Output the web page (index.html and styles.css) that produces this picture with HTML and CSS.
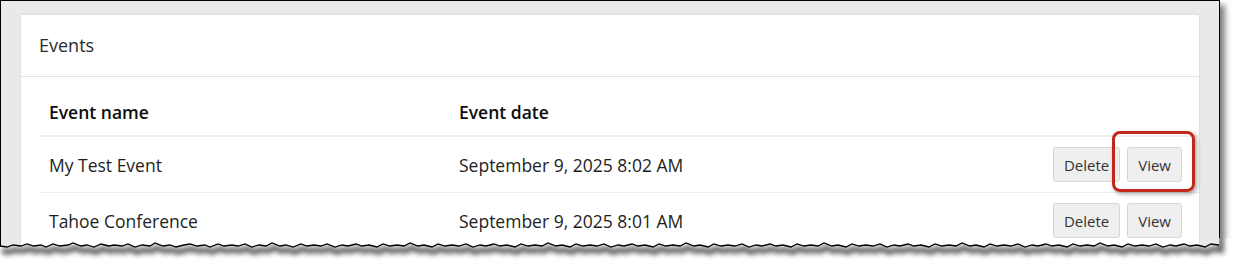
FILE: index.html
```html
<!DOCTYPE html>
<html lang="en">

<head>
    <meta charset="UTF-8">
    <meta name="viewport" content="width=device-width, initial-scale=1.0">
    <title>Events</title>
    <link rel="stylesheet" href="styles.css">
</head>

<body>
    <div class="shot">
        <div class="frame">
            <!-- Events card -->
            <section class="card">
                <div class="card-header">Events</div>
                <div class="card-body">
                    <table class="events">
                        <thead>
                            <tr>
                                <th class="col-name">Event name</th>
                                <th class="col-date">Event date</th>
                                <th class="col-actions"></th>
                            </tr>
                        </thead>
                        <tbody>
                            <tr>
                                <td>My Test Event</td>
                                <td>September 9, 2025 8:02 AM</td>
                                <td class="col-actions">
                                    <div class="actions">
                                        <button class="btn">Delete</button>
                                        <span class="btn-wrap">
                                            <button class="btn">View</button>
                                            <span class="callout"></span>
                                        </span>
                                    </div>
                                </td>
                            </tr>
                            <tr>
                                <td>Tahoe Conference</td>
                                <td>September 9, 2025 8:01 AM</td>
                                <td class="col-actions">
                                    <div class="actions">
                                        <button class="btn">Delete</button>
                                        <button class="btn">View</button>
                                    </div>
                                </td>
                            </tr>
                        </tbody>
                    </table>
                </div>
            </section>
        </div>

        <!-- torn bottom edge of the screenshot -->
        <svg class="torn" width="1235" height="29" viewBox="0 0 1235 29">
            <defs>
                <filter id="blur" x="-5%" y="-100%" width="110%" height="300%">
                    <feGaussianBlur stdDeviation="2.4" />
                </filter>
                <clipPath id="below">
                    <polygon points="0,0 0,8 7,9 13,7 21,8 27,6 34,8 41,7 46,9 53,6 60,8 68,7 73,5 81,8 87,7 94,9 101,6 109,8 114,7 122,8 128,6 135,9 142,7 150,8 155,5 163,8 170,7 176,9 184,7 190,6 197,8 205,7 210,9 218,6 224,8 232,7 238,8 245,6 252,9 259,7 266,8 272,5 280,8 286,7 293,9 301,6 307,8 314,7 321,8 327,6 335,9 342,7 348,8 356,6 362,8 369,7 377,9 383,6 390,8 397,7 404,8 410,5 418,8 424,7 432,9 438,6 445,8 452,7 459,8 466,6 473,9 480,7 486,8 494,6 500,8 507,7 515,9 521,6 528,8 535,7 542,8 548,5 556,8 562,7 570,9 576,6 583,8 590,7 597,8 604,6 611,9 618,7 624,8 632,6 638,8 645,7 653,9 659,6 666,8 673,7 680,8 686,5 694,8 700,7 708,9 714,6 721,8 728,7 735,8 742,6 749,9 756,7 762,8 770,6 776,8 783,7 791,9 797,6 804,8 811,7 818,8 824,5 832,8 838,7 846,9 852,6 859,8 866,7 873,8 880,6 887,9 894,7 900,8 908,6 914,8 921,7 929,9 935,6 942,8 949,7 956,8 962,5 970,8 976,7 984,9 990,6 997,8 1004,7 1011,8 1018,6 1025,9 1032,7 1038,8 1046,6 1052,8 1059,7 1067,9 1073,6 1080,8 1087,7 1094,8 1100,5 1108,8 1114,7 1122,9 1128,6 1135,8 1142,7 1149,8 1156,6 1163,9 1170,7 1176,8 1184,6 1190,8 1197,7 1205,9 1211,6 1219,7 1219,0 1235,0 1235,29 0,29" />
                </clipPath>
            </defs>
            <rect class="cover" x="0" y="0" width="1235" height="29" clip-path="url(#below)" />
            <g clip-path="url(#below)">
                <polyline class="shade" filter="url(#blur)" transform="translate(2 5)" points="0,8 7,9 13,7 21,8 27,6 34,8 41,7 46,9 53,6 60,8 68,7 73,5 81,8 87,7 94,9 101,6 109,8 114,7 122,8 128,6 135,9 142,7 150,8 155,5 163,8 170,7 176,9 184,7 190,6 197,8 205,7 210,9 218,6 224,8 232,7 238,8 245,6 252,9 259,7 266,8 272,5 280,8 286,7 293,9 301,6 307,8 314,7 321,8 327,6 335,9 342,7 348,8 356,6 362,8 369,7 377,9 383,6 390,8 397,7 404,8 410,5 418,8 424,7 432,9 438,6 445,8 452,7 459,8 466,6 473,9 480,7 486,8 494,6 500,8 507,7 515,9 521,6 528,8 535,7 542,8 548,5 556,8 562,7 570,9 576,6 583,8 590,7 597,8 604,6 611,9 618,7 624,8 632,6 638,8 645,7 653,9 659,6 666,8 673,7 680,8 686,5 694,8 700,7 708,9 714,6 721,8 728,7 735,8 742,6 749,9 756,7 762,8 770,6 776,8 783,7 791,9 797,6 804,8 811,7 818,8 824,5 832,8 838,7 846,9 852,6 859,8 866,7 873,8 880,6 887,9 894,7 900,8 908,6 914,8 921,7 929,9 935,6 942,8 949,7 956,8 962,5 970,8 976,7 984,9 990,6 997,8 1004,7 1011,8 1018,6 1025,9 1032,7 1038,8 1046,6 1052,8 1059,7 1067,9 1073,6 1080,8 1087,7 1094,8 1100,5 1108,8 1114,7 1122,9 1128,6 1135,8 1142,7 1149,8 1156,6 1163,9 1170,7 1176,8 1184,6 1190,8 1197,7 1205,9 1211,6 1219,7 1219,-20" />
            </g>
            <polyline class="edge" points="0,8 7,9 13,7 21,8 27,6 34,8 41,7 46,9 53,6 60,8 68,7 73,5 81,8 87,7 94,9 101,6 109,8 114,7 122,8 128,6 135,9 142,7 150,8 155,5 163,8 170,7 176,9 184,7 190,6 197,8 205,7 210,9 218,6 224,8 232,7 238,8 245,6 252,9 259,7 266,8 272,5 280,8 286,7 293,9 301,6 307,8 314,7 321,8 327,6 335,9 342,7 348,8 356,6 362,8 369,7 377,9 383,6 390,8 397,7 404,8 410,5 418,8 424,7 432,9 438,6 445,8 452,7 459,8 466,6 473,9 480,7 486,8 494,6 500,8 507,7 515,9 521,6 528,8 535,7 542,8 548,5 556,8 562,7 570,9 576,6 583,8 590,7 597,8 604,6 611,9 618,7 624,8 632,6 638,8 645,7 653,9 659,6 666,8 673,7 680,8 686,5 694,8 700,7 708,9 714,6 721,8 728,7 735,8 742,6 749,9 756,7 762,8 770,6 776,8 783,7 791,9 797,6 804,8 811,7 818,8 824,5 832,8 838,7 846,9 852,6 859,8 866,7 873,8 880,6 887,9 894,7 900,8 908,6 914,8 921,7 929,9 935,6 942,8 949,7 956,8 962,5 970,8 976,7 984,9 990,6 997,8 1004,7 1011,8 1018,6 1025,9 1032,7 1038,8 1046,6 1052,8 1059,7 1067,9 1073,6 1080,8 1087,7 1094,8 1100,5 1108,8 1114,7 1122,9 1128,6 1135,8 1142,7 1149,8 1156,6 1163,9 1170,7 1176,8 1184,6 1190,8 1197,7 1205,9 1211,6 1219,7" />
        </svg>
    </div>
</body>

</html>
```

FILE: styles.css
```css
body {
    font-family: 'Open Sans', 'Noto Sans', sans-serif;
    margin: 0;
    padding: 0;
    background-color: #fff;
}

.shot {
    position: relative;
    width: 1235px;
    height: 267px;
    overflow: hidden;
}

.frame {
    width: 1199px;
    height: 260px;
    padding: 13px 0 0 19px;
    border: 1px solid #000;
    background-color: #e9e9e9;
    box-shadow: 5px 5px 6px rgba(0, 0, 0, 0.5);
}

.card {
    width: 1178px;
    background-color: #fff;
    border: 1px solid #dfdfdf;
}

.card-header {
    padding: 19px 18px 20px;
    font-size: 18px;
    line-height: 22px;
    color: #2b2b2b;
    border-bottom: 1px solid #e3e3e3;
}

.card-body {
    padding: 13px 0 40px 18px;
}

.events {
    width: 100%;
    border-collapse: collapse;
    font-size: 17.5px;
    color: #1e1e1e;
}

.events th {
    padding: 10px 10px 11px;
    line-height: 24px;
    text-align: left;
    font-weight: 600;
    color: #0d0d0d;
    border-bottom: 2px solid #eee;
}

.events td {
    padding: 10px;
    line-height: 24px;
    vertical-align: middle;
    border-bottom: 1px solid #eee;
}

.col-name {
    width: 390px;
}

.events .col-actions {
    padding-right: 17px;
}

.actions {
    display: flex;
    justify-content: flex-end;
    gap: 7px;
}

.btn {
    height: 35px;
    padding: 0 10px;
    font-family: 'Open Sans', 'Noto Sans', sans-serif;
    font-size: 15px;
    color: #333;
    background-color: #efefef;
    border: 1px solid #d6d6d6;
    border-radius: 3px;
}

.btn-wrap {
    position: relative;
    display: flex;
}

/* red annotation box round the View button */
.callout {
    position: absolute;
    top: -16px;
    right: -13px;
    bottom: -10px;
    left: -15px;
    border: 3px solid #c1271b;
    border-radius: 8px;
    box-shadow: 2px 2px 4px rgba(0, 0, 0, 0.35);
}

.torn {
    position: absolute;
    left: 0;
    top: 238px;
}

.torn .cover {
    fill: #fff;
}

.torn .shade {
    fill: none;
    stroke: rgba(0, 0, 0, 0.6);
    stroke-width: 6;
}

.torn .edge {
    fill: none;
    stroke: #000;
    stroke-width: 1.3;
}
```
